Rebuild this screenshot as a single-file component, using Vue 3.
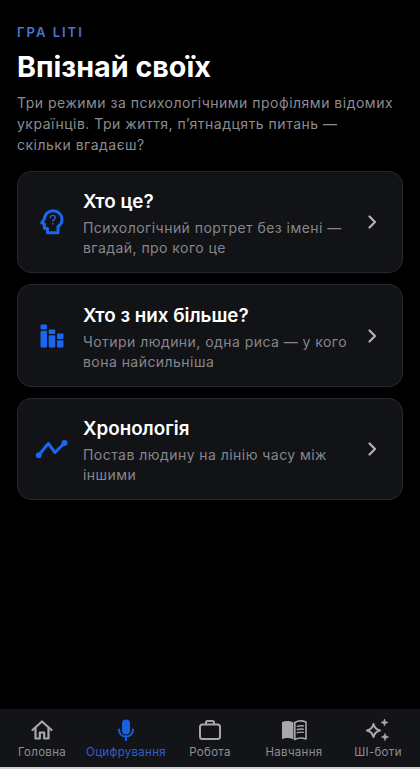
<script setup>
const modes = [
  { id: 'who', title: 'Хто це?', text: 'Психологічний портрет без імені — вгадай, про кого це' },
  { id: 'more', title: 'Хто з них більше?', text: 'Чотири людини, одна риса — у кого вона найсильніша' },
  { id: 'time', title: 'Хронологія', text: 'Постав людину на лінію часу між іншими' },
]
const tabs = [
  { id: 'home', label: 'Головна' },
  { id: 'mic', label: 'Оцифрування', active: true },
  { id: 'work', label: 'Робота' },
  { id: 'learn', label: 'Навчання' },
  { id: 'ai', label: 'ШІ-боти' },
]
</script>

<template>
  <div class="screen">
    <main class="content">
      <div class="eyebrow">ГРА LITI</div>
      <h1 class="title">Впізнай своїх</h1>
      <p class="lead">Три режими за психологічними профілями відомих<br />українців. Три життя, п’ятнадцять питань —<br />скільки вгадаєш?</p>
      <div class="cards">
        <div v-for="m in modes" :key="m.id" class="card">
          <div class="card-icon">
            <svg v-if="m.id === 'who'" width="24" height="26" viewBox="0 0 24 26" fill="none" stroke="#1a66f0" stroke-width="3" stroke-linejoin="round" stroke-linecap="round">
              <path d="M7.500 23.800v-4.300H5.600a1.300 1.300 0 0 1-1.300-1.300v-3.300L1.800 13.800 4.200 10C4.700 5.200 8.300 1.700 13 1.700c5 0 9 3.900 9 8.900 0 3-1.500 5.500-4 7v6.200z" />
              <path d="M10.300 8.700c0-1.400 1.100-2.300 2.500-2.300s2.500.9 2.500 2.200c0 1.900-2.500 2-2.500 3.600" stroke="#2f64c8" stroke-width="1.400" />
              <circle cx="12.800" cy="14.700" r="0.300" stroke="#2f64c8" stroke-width="1.200" />
            </svg>
            <svg v-else-if="m.id === 'more'" width="24" height="24" viewBox="0 0 24 24" fill="#1a66f0">
              <rect x="0.500" y="0.500" width="6.500" height="5" rx="1" />
              <rect x="0.500" y="6.700" width="6.500" height="16.800" rx="1" />
              <rect x="8.700" y="5.500" width="6.500" height="4.500" rx="1" />
              <rect x="8.700" y="11.200" width="6.500" height="12.300" rx="1" />
              <rect x="17" y="9.500" width="6.500" height="5.500" rx="1" />
              <rect x="17" y="16.200" width="6.500" height="7.300" rx="1" />
            </svg>
            <svg v-else width="32" height="18" viewBox="0 0 32 18" fill="none" stroke="#1a66f0" stroke-width="3" stroke-linejoin="round" stroke-linecap="round">
              <path d="M2.500 15.500L12.300 3.500l6.700 9L28.500 3" />
              <circle cx="2.800" cy="15.200" r="1.500" fill="#1a66f0" />
              <circle cx="28.500" cy="3" r="1.500" fill="#1a66f0" />
            </svg>
          </div>
          <div class="card-body">
            <div class="card-title">{{ m.title }}</div>
            <div class="card-text">{{ m.text }}</div>
          </div>
          <svg class="chev" width="10" height="16" viewBox="0 0 10 16" fill="none" stroke="#b4b4b8" stroke-width="2.200" stroke-linecap="round" stroke-linejoin="round">
            <path d="M2.500 2.500L8 8l-5.500 5.500" />
          </svg>
        </div>
      </div>
    </main>
    <nav class="tabbar">
      <div v-for="t in tabs" :key="t.id" class="tab" :class="{ active: t.active }">
        <div class="tab-icon">
          <svg v-if="t.id === 'home'" width="22" height="20" viewBox="0 0 22 20" fill="none" stroke="#a8a8ac" stroke-width="2.200" stroke-linejoin="round" stroke-linecap="round">
            <path d="M1.500 10L11 1.500 20.500 10" />
            <path d="M4.500 8v10.500h4.300V12.500h4.400v6h4.300V8" />
          </svg>
          <svg v-else-if="t.id === 'mic'" width="18" height="22" viewBox="0 0 18 22" fill="none" stroke="#1a5fe0" stroke-width="2" stroke-linecap="round">
            <rect x="5" y="0.500" width="8" height="15" rx="4" fill="#1a5fe0" stroke="none" />
            <path d="M2 10.500c0 4.300 2.900 7 7 7s7-2.700 7-7" />
            <path d="M9 17.500V21.200" />
          </svg>
          <svg v-else-if="t.id === 'work'" width="24" height="22" viewBox="0 0 24 22" fill="none" stroke="#a8a8ac" stroke-width="2" stroke-linejoin="round">
            <rect x="2" y="5.500" width="20" height="14.500" rx="2.500" />
            <path d="M8 5.500V3.500A1.500 1.500 0 0 1 9.500 2h5A1.500 1.500 0 0 1 16 3.500v2" />
          </svg>
          <svg v-else-if="t.id === 'learn'" width="26" height="22" viewBox="0 0 26 22">
            <path d="M1 3C4.800 1.500 9 1.700 12.400 3.500v17C9 18.800 4.800 18.600 1 20z" fill="#a8a8ac" />
            <path d="M13.800 3.500C17 1.700 21.200 1.500 25 3v17c-3.800-1.400-8-1.200-11.200.500z" fill="none" stroke="#a8a8ac" stroke-width="1.600" stroke-linejoin="round" />
            <path d="M16.300 7.300c1.900-.6 4-.7 6-.3M16.300 10.500c1.900-.6 4-.7 6-.3M16.300 13.700c1.900-.6 4-.7 6-.3" fill="none" stroke="#a8a8ac" stroke-width="1.400" stroke-linecap="round" />
          </svg>
          <svg v-else width="24" height="24" viewBox="0 0 24 24">
            <path d="M7.500 5.500c.9 3.800 2.400 5.500 6.500 6.500-4.100 1-5.600 2.700-6.500 6.500C6.600 14.700 5.100 13 1 12c4.100-1 5.600-2.700 6.500-6.500z" transform="translate(0 0.500)" fill="none" stroke="#a8a8ac" stroke-width="2" stroke-linejoin="round" />
            <path d="M18.500 1c.4 2.200 1.300 3.100 3.500 3.500-2.200.4-3.100 1.300-3.500 3.500-.4-2.200-1.300-3.100-3.500-3.500 2.200-.4 3.100-1.300 3.500-3.500z" fill="#a8a8ac" stroke="#a8a8ac" stroke-width="0.800" stroke-linejoin="round" />
            <path d="M19 15.500c.4 2.200 1.300 3.100 3.500 3.500-2.200.4-3.100 1.300-3.500 3.500-.4-2.200-1.300-3.100-3.500-3.500 2.200-.4 3.100-1.300 3.500-3.500z" fill="#a8a8ac" stroke="#a8a8ac" stroke-width="0.800" stroke-linejoin="round" />
          </svg>
        </div>
        <span class="tab-label">{{ t.label }}</span>
      </div>
    </nav>
  </div>
</template>

<style>
html, body { margin: 0; background: #000; }
</style>

<style scoped>
.screen {
  width: 420px;
  height: 769px;
  background: #000;
  display: flex;
  flex-direction: column;
  font-family: Inter, "Noto Sans", sans-serif;
  overflow: hidden;
}
.content {
  flex: 1;
  padding: 25px 17px 0;
}
.eyebrow {
  color: #4a72d6;
  font-size: 13px;
  font-weight: 600;
  letter-spacing: 2px;
  line-height: 15px;
}
.title {
  margin: 8px 0 0;
  color: #fff;
  font-size: 28.700px;
  font-weight: 700;
  line-height: 38px;
}
.lead {
  margin: 5.5px 0 0;
  color: #8c8c90;
  font-size: 14px;
  line-height: 21.3px;
  letter-spacing: 0.5px;
  white-space: nowrap;
}
.cards {
  margin-top: 15.5px;
  display: flex;
  flex-direction: column;
  gap: 11px;
}
.card {
  height: 102.5px;
  box-sizing: border-box;
  background: #121317;
  border: 1px solid #27282d;
  border-radius: 14px;
  display: flex;
  align-items: center;
  padding: 4px 25px 0 18px;
}
.card-icon {
  width: 32px;
  margin-right: 15px;
  margin-top: -4px;
  display: flex;
  justify-content: center;
  flex: none;
}
.card-body { flex: 1; min-width: 0; }
.card-title {
  color: #fff;
  font-size: 18.800px;
  font-weight: 600;
  line-height: 24px;
}
.card-text {
  margin-top: 4px;
  color: #86868b;
  font-size: 14px;
  line-height: 19.700px;
  letter-spacing: 0.45px;
}
.chev { flex: none; margin-left: 14px; margin-top: -4px; }
.tabbar {
  height: 60px;
  box-sizing: border-box;
  background: #131418;
  border-bottom: 2px solid #d4d4d6;
  display: flex;
}
.tab {
  flex: 1 1 0;
  min-width: 0;
  display: flex;
  flex-direction: column;
  align-items: center;
  padding-top: 8px;
  color: #8e8e93;
}
.tab.active { color: #2f5fd0; }
.tab-icon { height: 26px; display: flex; align-items: center; justify-content: center; }
.tab-label {
  margin-top: 2px;
  font-size: 11.500px;
  line-height: 14px;
  letter-spacing: 0.3px;
  white-space: nowrap;
}
</style>
